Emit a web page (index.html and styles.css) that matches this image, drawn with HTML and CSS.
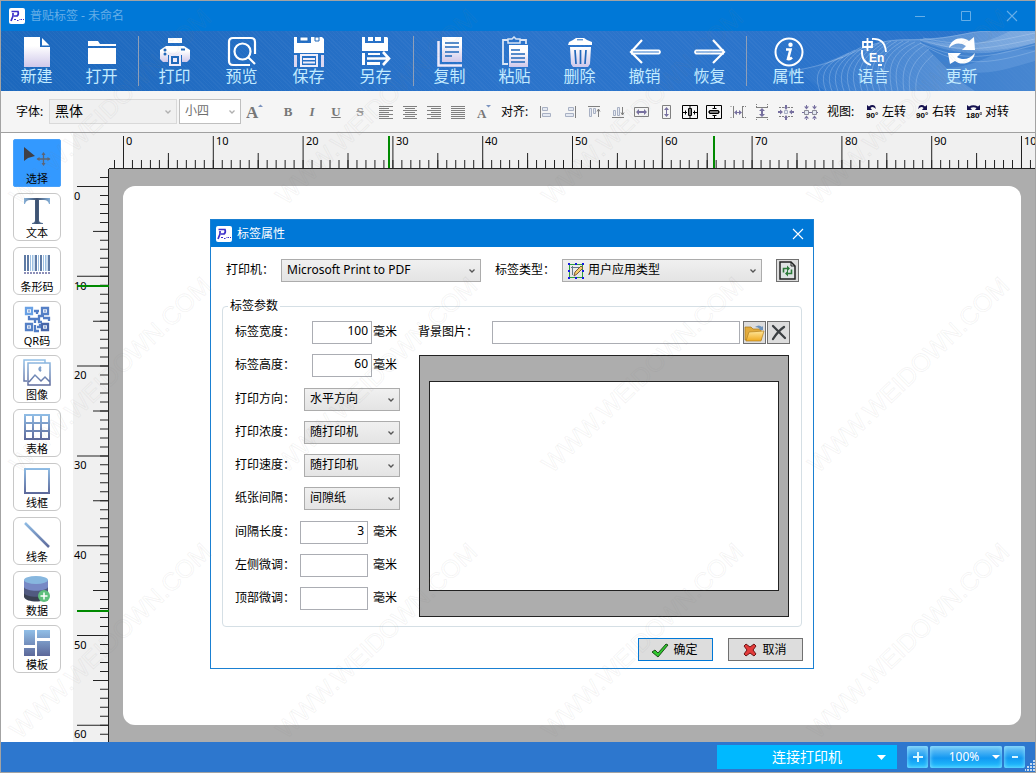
FILE: index.html
```html
<!DOCTYPE html>
<html lang="zh-CN">
<head>
<meta charset="utf-8">
<title>普贴标签 - 未命名</title>
<link rel="stylesheet" href="styles.css">
</head>
<body>
<svg class="defs" width="0" height="0" aria-hidden="true">
  <defs>
    <linearGradient id="pale" x1="0" y1="0" x2="0" y2="1"><stop offset=".3" stop-color="#fff"/><stop offset="1" stop-color="#cfc8ea"/></linearGradient>
    <linearGradient id="steel" gradientUnits="userSpaceOnUse" x1="0" y1="0" x2="0" y2="28"><stop offset="0" stop-color="#93c2ea"/><stop offset="1" stop-color="#5a6496"/></linearGradient>
    <linearGradient id="bars" gradientUnits="userSpaceOnUse" x1="0" y1="0" x2="28" y2="0"><stop offset="0" stop-color="#3f5680"/><stop offset=".5" stop-color="#9dc4e8"/><stop offset="1" stop-color="#3f5680"/></linearGradient>
    <linearGradient id="tee" gradientUnits="userSpaceOnUse" x1="0" y1="0" x2="28" y2="0"><stop offset="0" stop-color="#8db9e2"/><stop offset=".5" stop-color="#3c506f"/><stop offset="1" stop-color="#8db9e2"/></linearGradient>
    <linearGradient id="folder" x1="0" y1="0" x2="0" y2="1"><stop offset="0" stop-color="#ffe69a"/><stop offset="1" stop-color="#efa91e"/></linearGradient>
    <symbol id="logo" viewBox="0 0 16 16"><rect width="16" height="16" rx="2" fill="#fff"/><path d="M2.500 3.500H9q1 3-1 4.500H5M4 5v3l-2 5" fill="none" stroke="#3b2fc9" stroke-width="1.700"/><path d="M5 11.500h2M8 12.500h1.500M10.500 11.500h1M12 11.500h1M14 11.500h1" stroke="#3b2fc9" stroke-width="1.200"/></symbol>
    <symbol id="chev" viewBox="0 0 8 8"><path d="M1.500 2.500 4 5l2.500-2.500" fill="none" stroke="currentColor" stroke-width="1.300"/></symbol>
    <symbol id="close" viewBox="0 0 12 12"><path d="m1 1 10 10M11 1 1 11" stroke="currentColor" fill="none" stroke-width="1.100"/></symbol>
  </defs>
</svg>
<div class="window">
  <header class="titlebar">
    <svg class="logo" width="16" height="16"><use href="#logo"/></svg>
    <h1>普贴标签 - 未命名</h1>
    <div class="winbtns">
      <button aria-label="最小化"><svg width="12" height="12"><path d="M1 6.500h10" stroke="currentColor"/></svg></button>
      <button aria-label="最大化"><svg width="12" height="12"><path d="M1.500 1.500h9v9h-9z" fill="none" stroke="currentColor"/></svg></button>
      <button aria-label="关闭"><svg width="12" height="12"><use href="#close"/></svg></button>
    </div>
  </header>

  <nav class="toolbar">
    <svg class="waves" width="290" height="60" viewBox="0 0 290 60" aria-hidden="true">
      <defs>
        <linearGradient id="swell" x1="0" y1="0" x2="1" y2="0"><stop offset="0" stop-color="#fff" stop-opacity=".02"/><stop offset=".6" stop-color="#fff" stop-opacity=".2"/><stop offset="1" stop-color="#fff" stop-opacity=".3"/></linearGradient>
      </defs>
      <path d="M50 39C95 32 110 10 160 8c50 0 60-8 85-8h45v60H80q-20-15-30-21" fill="url(#swell)"/>
      <path d="M175 10c45 18 75 14 115 2v48h-60c-20-12-35-30-55-50" fill="#2a72c8" opacity=".55"/>
      <g fill="none" stroke="#c3dcf6" stroke-opacity=".38" stroke-width=".8">
        <path d="M30 42C110 34 110 9 160 9s60-9 85-9M175 9c45 14 65 9 115-1M178 7c45 10 65 5 112-5M175 12c45 20 65 15 115 2M180 15c35 20 60 20 110 5"/>
        <path d="M75 60C68 42 75 32 98 26M81 60C74 42 81 32 104 22M87 60C80 42 87 31 110 19M93 60C86 42 93 30 116 16M99 60C92 41 99 29 122 14M105 60C98 40 105 28 128 13M111 60C104 39 111 27 134 12M117 60C110 38 117 26 140 11M123 60C116 38 123 25 146 10M129 60C122 38 129 24 152 10M135 60C128 37 135 23 158 10M141 60C134 36 141 22 164 10M147 60C142 36 146 22 170 11M153 60C148 38 152 24 176 12M159 60C156 40 160 26 180 14M165 60C162 42 168 30 184 18M171 60C170 46 174 36 188 24"/>
      </g>
      <path d="M175 8c45 10 65 5 90-8h25v12c-40 10-75 12-115-4" fill="#fff" opacity=".14"/>
      <path d="M200 37c40-1 45-22 90-18v11c-30 8-50 18-90 7" fill="#8db8ea" opacity=".25"/>
    </svg>
    <button class="tool"><svg width="30" height="32"><path d="M2 1h16v10h10v20H2z" fill="url(#pale)"/><path d="m20 2 7.500 7.500H20z" fill="#fff"/></svg>新建</button>
    <button class="tool"><svg width="30" height="32"><path d="M1 5h10l2 3h16v2H1zM1 12h28v16H1z" fill="#fff"/></svg>打开</button>
    <span class="sep"></span>
    <button class="tool wide"><svg width="34" height="32"><path d="M10 2h14v5H10z" fill="#fff"/><path d="M8 10h18l6 4v9l-3 3h-5v-7H10v7H5l-3-3v-9z" fill="url(#pale)"/><path d="M12 19h10v10H12z" fill="#2168ba" stroke="#eeebfa" stroke-width="2"/><path d="M15 22h4v4h-4z" fill="#eeebfa"/><circle cx="7" cy="14" r="1.500" fill="#2168ba"/><circle cx="7" cy="18" r="1.500" fill="#2168ba"/><path d="M23 13.500h4" stroke="#2168ba" stroke-width="2"/></svg>打印</button>
    <button class="tool wide"><svg width="30" height="32" fill="none" stroke="#fff" stroke-width="2.200"><path d="M28 18V6q0-4-4-4H6Q2 2 2 6v19q0 4 4 4h17"/><circle cx="15.500" cy="15.500" r="8"/><path d="m21 21 7 7"/></svg>预览</button>
    <button class="tool wide"><svg width="32" height="32"><path d="M1 1h3v6h14V1h11l2 2v14H1z" fill="#fff"/><path d="M7 1h8v4H7zM22 1h4v4h-4z" fill="#fff" stroke="#2168ba"/><path d="M1 19h3v12H1zM28 19h3v12h-3z" fill="#ddd8f0"/><path d="M8 19h16v11H8zM10 23h12M10 26.500h12" fill="none" stroke="#f0eefa" stroke-width="2"/></svg>保存</button>
    <button class="tool wide"><svg width="32" height="32"><path d="M2 1h3v6h19V1h3l1 1v13H2zM8 1h5v4H8zM15 1h6v4h-6z" fill="#fff"/><path d="M2 17h3v12H2zM7 26h13v3H7zM8 17h12v2H8z" fill="#fff"/><path d="M7 22.500h20M23 16l6 6.500-6 6.500" fill="none" stroke="#fff" stroke-width="2.600"/></svg>另存</button>
    <span class="sep"></span>
    <button class="tool"><svg width="30" height="32"><path d="M7 1h20v25H7z" fill="url(#pale)"/><path d="M10 7h14M10 11h14M10 16h14M10 20h7" stroke="#2168ba" stroke-width="1.700"/><path d="M3.500 5v24.500H27" fill="none" stroke="#eeeafa" stroke-width="2.500"/></svg>复制</button>
    <button class="tool"><svg width="30" height="32"><path d="M8 4H3v24h5M20 4h6v4" fill="none" stroke="#d9e5f6" stroke-width="1.800"/><path d="M8 7V3h4l2-2 2 2h4v4z" fill="none" stroke="#d9e5f6" stroke-width="1.500"/><path d="M9 9h19v22H9z" fill="url(#pale)"/><path d="M11 14h9M11 18h14M11 22h14M11 26h14" stroke="#2168ba" stroke-width="1.500"/></svg>粘贴</button>
    <button class="tool"><svg width="30" height="32"><path d="M4 6 8 4l3-2h8l3 2 5 2v3H3zM5 11h21l-1 17-2 3H8l-2-3z" fill="url(#pale)"/><path d="m10 14 1 14M15.500 14v14M21 14l-1 14" stroke="#2168ba" stroke-width="1.700"/><path d="M12 3.800h6" stroke="#2168ba"/></svg>删除</button>
    <button class="tool"><svg width="34" height="32" fill="none" stroke="#fff" stroke-width="2.200"><path d="M14 4 3 16l11 11"/><path d="M3 14.500h28q2 1.500 0 3H3" stroke-width="1.800"/></svg>撤销</button>
    <button class="tool"><svg width="34" height="32" fill="none" stroke="#fff" stroke-width="2.200"><path d="m20 4 11 12-11 11"/><path d="M31 14.500H3q-2 1.500 0 3h28" stroke-width="1.800"/></svg>恢复</button>
    <span class="sep"></span>
    <button class="tool info"><svg width="32" height="32"><circle cx="16" cy="16" r="13.500" fill="none" stroke="#fff" stroke-width="2"/><circle cx="17.500" cy="8.800" r="2.200" fill="#fff"/><path d="M13 13.500h4.500L15 23q2 .5 4-1.500" fill="none" stroke="#fff" stroke-width="2.600"/></svg>属性</button>
    <button class="tool lang"><svg width="32" height="32"><path d="M14 3q13-1 14 13M4 14q-1 12 9 15M20 29h4" fill="none" stroke="#fff" stroke-width="1.800"/><path d="M5 6h9v5H5zM9.500 2v13" fill="none" stroke="#fff" stroke-width="1.800"/><text class="en" x="11" y="26">En</text></svg>语言</button>
    <button class="tool update"><svg width="32" height="32"><path d="M3 12C5 2 17 0 23 5l5-4 1 13H16l4-4C14 6 8 7 3 12zM29 17c-2 11-14 13-20 8l-5 3-2-11h13l-4 4c6 4 13 2 18-4z" fill="#fff"/></svg>更新</button>
  </nav>

  <div class="formatbar">
    <label for="font">字体:</label>
    <span class="pick font"><select id="font"><option>黑体</option></select><svg width="8" height="8"><use href="#chev"/></svg></span>
    <span class="pick size"><select aria-label="字号"><option>小四</option></select><svg width="8" height="8"><use href="#chev"/></svg></span>
    <button class="fmt" aria-label="增大字号"><svg width="18" height="18"><text class="serif big" x="0" y="15">A</text><path d="m12 4 2.500-2.500L17 4z" fill="#7b93bf"/></svg></button>
    <div class="group style">
      <button class="fmt serif"><b>B</b></button><button class="fmt serif"><i>I</i></button><button class="fmt serif"><u>U</u></button><button class="fmt serif strike"><s>S</s></button>
    </div>
    <div class="group align">
      <button class="fmt" aria-label="左对齐"><svg width="14" height="14"><path d="M0 1.500h14M0 3.500h10M0 5.500h14M0 7.500h10M0 9.500h14M0 11.500h10M0 13.500h14"/></svg></button>
      <button class="fmt" aria-label="居中"><svg width="14" height="14"><path d="M0 1.500h14M2 3.500h10M0 5.500h14M2 7.500h10M0 9.500h14M2 11.500h10M0 13.500h14"/></svg></button>
      <button class="fmt" aria-label="右对齐"><svg width="14" height="14"><path d="M0 1.500h14M4 3.500h10M0 5.500h14M4 7.500h10M0 9.500h14M4 11.500h10M0 13.500h14"/></svg></button>
      <button class="fmt" aria-label="两端对齐"><svg width="14" height="14"><path d="M0 1.500h14M0 3.500h14M0 5.500h14M0 7.500h14M0 9.500h14M0 11.500h14M0 13.500h14"/></svg></button>
    </div>
    <button class="fmt" aria-label="减小字号"><svg width="18" height="18"><text class="serif" x="2" y="15">A</text><path d="m11 2 2.500 2.500L16 2z" fill="#7b93bf"/></svg></button>
    <span class="cap">对齐:</span>
    <div class="group arrange">
      <button class="fmt" aria-label="左边对齐"><svg width="16" height="16"><path d="M2.500 2v12"/><path class="lt" d="M4.500 3.500h5v3h-5zM4.500 9.500h8v3h-8z"/></svg></button>
      <button class="fmt" aria-label="右边对齐"><svg width="16" height="16"><path d="M13.500 2v12"/><path class="lt" d="M6.500 3.500h5v3h-5zM3.500 9.500h8v3h-8z"/></svg></button>
      <button class="fmt" aria-label="顶部对齐"><svg width="16" height="16"><path d="M2 2.500h12M12.500 5v8M11 7.500 12.500 5 14 7.500"/><path class="lt" d="M3.500 4.500h2v8h-2zM7.500 4.500h2v5h-2z"/></svg></button>
      <button class="fmt" aria-label="底部对齐"><svg width="16" height="16"><path d="M2 13.500h12M12.500 3v8M11 8.500l1.500 2.500L14 8.500"/><path class="lt" d="M3.500 6.500h2v5h-2zM7.500 3.500h2v8h-2z"/></svg></button>
      <button class="fmt" aria-label="等宽"><svg width="16" height="16"><path d="M.5 3.500h14v9H.5z"/><path class="arr" d="M5 5 2 8l3 3V9h5v2l3-3-3-3v2H5z"/></svg></button>
      <button class="fmt" aria-label="等高"><svg width="16" height="16"><path d="M4.500 1.500h8v13h-8z"/><path class="arr" d="M6 6l2.500-3L11 6H9v4h2l-2.500 3L6 10h2V6z"/></svg></button>
      <button class="fmt dark" aria-label="水平居中"><svg width="16" height="16"><path d="M.5 1.500h15v13H.5zM6.500 4.500h3v7h-3zM8 2v12M1 8.500h4M15 8.500h-4M3.500 6.500v4M12.500 6.500v4"/></svg></button>
      <button class="fmt dark" aria-label="垂直居中"><svg width="16" height="16"><path d="M.5 1.500h15v13H.5zM3.500 6.500h9v3h-9zM2 8h12M8.500 2v3M8.500 14v-3M6.500 4.500h4M6.500 11.500h4"/></svg></button>
      <button class="fmt" aria-label="水平间距"><svg width="16" height="16"><path stroke-dasharray="1 1" d="M.5 2.500h2M.5 13.500h2M13 2.500h3M13 13.500h3"/><path d="M3.500 2v12M12.500 2v12"/><path class="arr" d="M7 6 4 8.500 7 11V9h2v2l3-2.500L9 6v2H7z"/></svg></button>
      <button class="fmt" aria-label="垂直间距"><svg width="16" height="16"><path stroke-dasharray="1 1" d="M2.500 0v3M13.500 0v3M2.500 13v3M13.500 13v3"/><path d="M2 3.500h12M2 13.500h12"/><path class="arr" d="M5 7l3-3 3 3H9v3h2l-3 3-3-3h2V7z"/></svg></button>
      <button class="fmt" aria-label="等距横排"><svg width="16" height="16"><path stroke-dasharray="2 1" d="M1 3.500h14M1 12.500h14"/><path class="lt" d="M6.500 6.500h3v3h-3z"/><path class="arr" d="M6 3h4L8 6zM6 14h4l-2-3zM2 5.500 5 8l-3 2.500zM14 5.500 11 8l3 2.500zM7 1h2v2H7zM7 14h2v2H7zM0 7h2v2H0zM14 7h2v2h-2z"/></svg></button>
      <button class="fmt" aria-label="等距竖排"><svg width="16" height="16"><path class="lt dk" d="M2.500 6.500h4v4h-4zM10.500 6.500h4v4h-4z"/><path class="arr" d="M2 2.500h5L4.500 5.500zM2 14.500h5l-2.500-3zM10 2.500h5l-2.500 3zM10 14.500h5l-2.500-3zM4 1h1v2H4zM12 1h1v2h-1zM0 8h2v1H0zM7 8h3v1H7zM15 8h1v1h-1zM4 14h1v2H4zM12 14h1v2h-1z"/></svg></button>
    </div>
    <span class="cap">视图:</span>
    <div class="group turn">
      <button><svg width="13" height="16"><path d="M1 6V1l2 1.500Q6 0 9 2l1 3-2-1.500Q6 2.500 4.500 4L6 6z" class="ink"/><text class="deg" x="0" y="14">90°</text></svg>左转</button>
      <button><svg width="13" height="16"><path d="M11 6V1L9 2.500Q6 0 3 2L2 5l2-1.500Q6 2.500 7.500 4L6 6z" class="ink"/><text class="deg" x="0" y="14">90°</text></svg>右转</button>
      <button><svg width="16" height="16"><path d="M1 6V1l2 1.500q4-2.500 9 0L14 1v5H9l1.500-2q-3-1.500-6 0L6 6z" class="ink"/><text class="deg" x="0" y="14">180°</text></svg>对转</button>
    </div>
  </div>

  <main class="work">
    <aside class="palette">
      <button class="item on"><svg width="28" height="28"><path d="M1 4v14l4-3 7-2z" fill="#3f3f46"/><path d="M20.500 10v12M14.500 16h12" stroke="#5b6577" stroke-width="1.300"/><path d="m18.500 12 2-3 2 3zM18.500 20l2 3 2-3zM16.500 14l-3 2 3 2zM24.500 14l3 2-3 2z" fill="#5b6577"/></svg>选择</button>
      <button class="item"><svg width="28" height="28"><path d="M1 1h26v6h-1q-1-4-5-4h-5v20q0 3 4 3v1H9v-1q3 0 3-3V3H7Q3 3 2 7H1z" fill="url(#tee)"/></svg>文本</button>
      <button class="item"><svg width="28" height="28"><path d="M2 4v16M5 4v16M13 4v16M18 4v16M26 4v16" stroke="#5f7ba5" stroke-width="2"/><path d="M7.500 4v16M9.500 4v16M11 4v16M15.500 4v16M20.500 4v16M22.500 4v16M24 4v16" stroke="#9dc0e2"/><path d="M1 22h26" stroke="#8d8fb8" stroke-width="2" stroke-dasharray="2 1"/></svg>条形码</button>
      <button class="item"><svg width="28" height="28" fill="none" stroke-width="2.300"><path d="M3 3h6v6H3z" stroke="#69a1e5"/><path d="M19 3h6v6h-6zM3 19h6v6H3z" stroke="#5580c6"/><path d="M19 19h6v6h-6z" stroke="#4765a8"/><path d="M11 6h5M14 6v3M6 11v3h6v4M12 14h4v-3h5M16 14v3h3M20 13h6v3M12 20v6h4M14 22h3v-3" stroke="#527dc5"/><path d="M5.500 6h1M21.500 6h1M5.500 22h1M21.500 22h1" stroke="#426db9"/></svg>QR码</button>
      <button class="item"><svg width="28" height="28" fill="none" stroke="url(#steel)" stroke-width="1.500"><path d="M4 22H1V1h21v3M5 4h22v22H5zM6 23l6-7 6 6 4-4 5 5"/><path d="M18 8q-3 2 0 4" stroke-width="2.500"/></svg>图像</button>
      <button class="item"><svg width="28" height="28"><path d="M1 1h26v26H1z" fill="url(#steel)"/><path d="M3 3h6v6H3zM11 3h6v6h-6zM19 3h6v6h-6zM3 11h6v6H3zM11 11h6v6h-6zM19 11h6v6h-6zM3 19h6v6H3zM11 19h6v6h-6zM19 19h6v6h-6z" fill="#fff"/></svg>表格</button>
      <button class="item"><svg width="28" height="28"><path d="M2 2h24v24H2z" fill="none" stroke="url(#steel)" stroke-width="2"/></svg>线框</button>
      <button class="item"><svg width="28" height="28"><path d="m2 2 24 24" fill="none" stroke="url(#steel)" stroke-width="2.500"/></svg>线条</button>
      <button class="item"><svg width="28" height="28"><path d="M1 16v6c2 6 22 6 24 0v-6z" fill="#3a4152"/><path d="M1 12v6c2 5 22 5 24 0v-6z" fill="#515a80"/><path d="M1 5v7c2 5 22 5 24 0V5z" fill="#7789c5"/><ellipse cx="13" cy="5" rx="12" ry="4" fill="#87b7df"/><circle cx="21" cy="21" r="6" fill="#5fbf7d"/><path d="M21 17.500v7M17.500 21h7" stroke="#fff" stroke-width="1.500"/></svg>数据</button>
      <button class="item"><svg width="28" height="28" fill="url(#steel)"><path d="M1 1h11v15H1zM14 1h13v8H14zM14 12h13v15H14zM1 19h11v8H1z"/></svg>模板</button>
    </aside>
    <div class="board">
      <span class="corner"></span>
      <svg class="ruler top" width="100%" height="36">
        <line x1="14" x2="100%" y1="19" y2="19" stroke-width="32" stroke-dasharray="1 88.800"/>
        <line x1="58.900" x2="100%" y1="28" y2="28" stroke-width="16" stroke-dasharray="1 88.800"/>
        <line x1="5" x2="100%" y1="31" y2="31" stroke-width="8" stroke-dasharray="1 7.980"/>
        <line x1="0" x2="100%" y1="35.500" y2="35.500"/>
        <path class="mark" d="M280 3v32M605 3v32"/>
        <g><text x="17" y="12">0</text><text x="107" y="12">10</text><text x="197" y="12">20</text><text x="287" y="12">30</text><text x="376" y="12">40</text><text x="466" y="12">50</text><text x="556" y="12">60</text><text x="646" y="12">70</text><text x="736" y="12">80</text><text x="825" y="12">90</text><text x="915" y="12">100</text></g>
      </svg>
      <svg class="ruler side" width="36" height="100%">
        <line y1="17" y2="100%" x1="19.500" x2="19.500" stroke-width="31" stroke-dasharray="1 88.800"/>
        <line y1="61.900" y2="100%" x1="27.500" x2="27.500" stroke-width="15" stroke-dasharray="1 88.800"/>
        <line y1="8" y2="100%" x1="31" x2="31" stroke-width="8" stroke-dasharray="1 7.980"/>
        <line y1="0" y2="100%" x1="35.500" x2="35.500"/>
        <g><text x="1" y="31">0</text><text x="1" y="121">10</text><text x="1" y="210">20</text><text x="1" y="300">30</text><text x="1" y="390">40</text><text x="1" y="480">50</text><text x="1" y="569">60</text></g>
        <path class="mark" d="M4 117h32M4 442h32"/>
      </svg>
      <div class="canvas"><div class="sheet"></div></div>
    </div>
  </main>

  <footer class="status">
    <button class="connect"><span>连接打印机</span><svg width="9" height="5"><path d="M0 0h9L4.500 5z" fill="#fff"/></svg></button>
    <div class="zoom">
      <button class="glass step" aria-label="放大"><svg width="12" height="12"><path d="M6 1v10M1 6h10" stroke="#d9f6ff" stroke-width="2"/></svg></button>
      <button class="glass level"><span>100%</span><svg width="8" height="5"><path d="M0 0h8L4 4z" fill="#fff"/></svg></button>
      <button class="glass step" aria-label="缩小"><svg width="12" height="12"><path d="M3 6h6" stroke="#d9f6ff" stroke-width="2"/></svg></button>
    </div>
    <svg class="grip" width="10" height="12" fill="#c4d8ee"><path d="M8 0h2v2H8zM5 3h2v2H5zM8 3h2v2H8zM2 6h2v2H2zM5 6h2v2H5zM8 6h2v2H8zM0 9h1v2H0zM2 9h2v2H2zM5 9h2v2H5zM8 9h2v2H8z"/></svg>
  </footer>
</div>

<section class="dialog" role="dialog" aria-labelledby="dlg-title">
  <header>
    <svg width="16" height="16"><use href="#logo"/></svg>
    <h2 id="dlg-title">标签属性</h2>
    <button aria-label="关闭"><svg width="12" height="12"><use href="#close"/></svg></button>
  </header>
  <form>
    <div class="row printer">
      <label for="printer">打印机：</label>
      <span class="pick long"><select id="printer"><option>Microsoft Print to PDF</option></select><svg width="8" height="8"><use href="#chev"/></svg></span>
      <label class="kind" for="kind">标签类型：</label>
      <span class="pick long withicon"><select id="kind"><option>用户应用类型</option></select>
        <svg class="lead" width="16" height="16"><path d="M1.500 1.500h13v13h-13z" fill="none" stroke="#2f9e3f"/><path d="M3 4.500h9M4.500 3v9" stroke="#678"/><path d="m6 13 1-4 6-6 2 2-6 6z" fill="#f6cd6b" stroke="#7b5a3c"/><path d="M0 0h2v2H0zM7 0h2v2H7zM14 0h2v2h-2zM0 7h2v2H0zM0 14h2v2H0zM7 14h2v2H7zM14 14h2v2h-2zM14 7h2v2h-2z" fill="#1519e0"/></svg>
        <svg width="8" height="8"><use href="#chev"/></svg></span>
      <button type="button" class="square" aria-label="刷新"><svg width="17" height="19"><path d="M1 1h11l4 4v13H1z" fill="#dfe3e3" stroke="#222" stroke-width="1.500"/><path d="M12 1v4h4" fill="none" stroke="#222"/><path d="M4.500 11.500v-4H8M12.500 8.500v4H9" fill="none" stroke="#2c7a39" stroke-width="1.600"/><path d="m8 4.500 3 3-3 3zM9 9.500l-3 3 3 3z" fill="#2c7a39"/></svg></button>
    </div>
    <fieldset>
      <legend>标签参数</legend>
      <div class="params">
        <div class="fields">
          <div class="set dims">
            <div class="row"><label for="w">标签宽度：</label><input id="w" value="100"><span>毫米</span></div>
            <div class="row"><label for="h">标签高度：</label><input id="h" value="60"><span>毫米</span></div>
          </div>
          <div class="set modes">
            <div class="row"><label for="dir">打印方向：</label><span class="pick"><select id="dir"><option>水平方向</option></select><svg width="8" height="8"><use href="#chev"/></svg></span></div>
            <div class="row"><label for="dens">打印浓度：</label><span class="pick"><select id="dens"><option>随打印机</option></select><svg width="8" height="8"><use href="#chev"/></svg></span></div>
            <div class="row"><label for="speed">打印速度：</label><span class="pick"><select id="speed"><option>随打印机</option></select><svg width="8" height="8"><use href="#chev"/></svg></span></div>
            <div class="row"><label for="gap">纸张间隔：</label><span class="pick"><select id="gap"><option>间隙纸</option></select><svg width="8" height="8"><use href="#chev"/></svg></span></div>
          </div>
          <div class="set tune">
            <div class="row"><label for="len">间隔长度：</label><input id="len" value="3"><span>毫米</span></div>
            <div class="row"><label for="left">左侧微调：</label><input id="left"><span>毫米</span></div>
            <div class="row"><label for="topadj">顶部微调：</label><input id="topadj"><span>毫米</span></div>
          </div>
        </div>
        <div class="picture">
          <div class="row"><label for="bg">背景图片：</label><input id="bg">
            <button type="button" class="square" aria-label="打开图片"><svg width="21" height="18"><path d="M1 3h6l2 2h8v11H1z" fill="#e2ab3c" stroke="#a97915" stroke-width=".7"/><path d="m5 8 15-1-3 10H2z" fill="url(#folder)" stroke="#b58321" stroke-width=".7"/><path d="M11 3q4-3 7 0l1-1v4h-4l1-1q-2-2-5-2" fill="#6d92bb"/></svg></button><button type="button" class="square" aria-label="清除图片"><svg width="18" height="18"><path d="M3 2q5 5 12 12M14 3Q8 7 3 15" fill="none" stroke="#3c4043" stroke-width="2.300" stroke-linecap="round"/></svg></button>
          </div>
          <div class="preview"><div></div></div>
        </div>
      </div>
    </fieldset>
    <div class="actions">
      <button type="button" class="ok"><svg width="18" height="16"><path d="m1 10 3-2 3 3 8-9 2 1L7 15z" fill="#30c92f" stroke="#1c4e19"/></svg>确定</button>
      <button type="button"><svg width="16" height="16"><path d="m2 4 2-2 4 3 4-3 2 2-3 4 3 4-2 2-4-3-4 3-2-2 3-4z" fill="#e33c3c" stroke="#6d1616"/></svg>取消</button>
    </div>
  </form>
</section>

<svg class="stamp" width="100%" height="100%" aria-hidden="true">
  <defs><g id="site"><text transform="rotate(-44)">WWW.WEIDOWN.COM</text></g></defs>
  <use href="#site" x="20" y="206"/><use href="#site" x="286" y="206"/><use href="#site" x="552" y="206"/><use href="#site" x="818" y="206"/>
  <use href="#site" x="20" y="474"/><use href="#site" x="286" y="474"/><use href="#site" x="552" y="474"/><use href="#site" x="818" y="474"/>
  <use href="#site" x="20" y="740"/><use href="#site" x="286" y="740"/><use href="#site" x="552" y="740"/><use href="#site" x="818" y="740"/>
</svg>
</body>
</html>
```

FILE: styles.css
```css
* { box-sizing: border-box; }

body {
  margin: 0;
  position: relative;
  height: 100vh;
  overflow: hidden;
  font: 12px/16px "Noto Sans", "Noto Sans CJK SC", sans-serif;
  color: #000;
}

.defs, .waves, .stamp { position: absolute; }

button, input, select { font: inherit; color: inherit; margin: 0; border-radius: 0; }
button { padding: 0; border: 0; background: none; display: flex; align-items: center; justify-content: center; }
svg { display: block; flex: none; }
h1, h2 { margin: 0; font-size: 12px; font-weight: 400; }

.window { display: flex; flex-direction: column; height: 100%; border: 1px solid #a3a3a3; }

/* title bar */
.titlebar { display: flex; align-items: center; height: 30px; padding-left: 8px; background: #0078d7; color: #66aee7; }
.titlebar h1 { margin-left: 5px; flex: 1; }
.winbtns { display: flex; }
.winbtns button { width: 46px; height: 28px; }

/* main toolbar */
.toolbar {
  position: relative;
  display: flex;
  height: 60px;
  padding-left: 3px;
  background: repeating-linear-gradient(45deg, #ffffff08 0 1px, transparent 1px 3px), linear-gradient(90deg, #1c68bd, #2b74cb 50%);
}
.waves { right: 0; top: 0; }
.tool { position: relative; flex-direction: column; justify-content: flex-start; width: 65px; padding-top: 5px; font-size: 16px; line-height: 17px; color: #c3ebff; }
.wide { width: 67px; }
.sep { width: 1px; height: 50px; margin: 5px 2px 0 4px; background: #8f9fb8; }
.sep + .tool:not(.wide):not(.info) { margin-left: 1px; }
.info { margin-left: 7px; }
.lang { margin-left: 20px; }
.update { margin-left: 23px; }
.en { font: bold 12px "Liberation Sans", sans-serif; fill: #fff; }

/* format bar */
.formatbar { display: flex; align-items: center; height: 42px; padding-left: 15px; background: #f5f5f5; border-bottom: 1px solid #a0a0a0; white-space: nowrap; }
.formatbar label { width: 33px; }
.pick { display: grid; height: 23px; color: #000; }
.pick > * { grid-area: 1 / 1; }
.pick select { appearance: none; width: 100%; padding: 0 5px 2px; border: 1px solid #acacac; background: linear-gradient(#f0f0f0, #e4e4e4); }
.pick svg { place-self: center end; margin-right: 5px; color: #555; pointer-events: none; }
.pick .lead { place-self: center start; margin-left: 6px; }
.withicon select { padding-left: 25px; }
.font { width: 128px; height: 25px; font-size: 14px; }
.font select { background: #f0f0f0; border-color: #d9d9d9; }
.size { width: 62px; height: 25px; margin: 0 2px; color: #6d6d6d; }
.size select { background: #fff; border-color: #bfbfbf; }
.font svg, .size svg { color: #b0b0b0; }
.fmt { width: 24px; height: 24px; }
.fmt svg { fill: none; stroke: #808080; }
.fmt text { fill: #777; stroke: none; }
.fmt svg .lt { fill: #e4e9f2; stroke: #a9b1c4; }
.fmt svg .dk { stroke: #8d8d99; }
.fmt svg .arr { fill: #77709f; stroke: none; }
.fmt path[fill] { stroke: none; }
.fmt.dark svg { stroke: #000; }
.serif { font: bold 13px/16px "Liberation Serif", serif; color: #777; }
.serif.big { font-size: 17px; }
.strike { color: #999; }
.group { display: flex; }
.style { margin-left: 9px; }
.align { margin: 0 2px; }
.cap { width: 29px; margin: 0 4px 0 5px; }
.turn { gap: 10px; margin-left: 6px; }
.turn button { gap: 3px; }
.ink { fill: #15114f; stroke: none; }
.deg { font: bold 8px "Liberation Sans", sans-serif; }

/* work area */
.work { display: flex; flex: 1; min-height: 0; }
.palette { display: flex; flex-direction: column; gap: 6px; width: 72px; padding: 6px 12px; background: #fff; }
.item { flex-direction: column; justify-content: flex-start; gap: 1px; height: 48px; padding-top: 3px; border: 1px solid #c8c8c8; border-radius: 6px; font-size: 11px; line-height: 14px; }
.on { background: #3399ff; border-color: #4aa2fb; border-radius: 2px; }
.board { flex: 1; min-width: 0; display: grid; grid-template: 36px 1fr / 36px 1fr; }
.corner, .ruler { background: #f0f0f0; }
.ruler { min-width: 0; min-height: 0; overflow: hidden; stroke: #222; }
.ruler text { font-size: 11px; fill: #000; stroke: none; }
.ruler .mark { stroke: #008a00; stroke-width: 2; }
.canvas { display: flex; padding: 17px 14px; background: #adadad; }
.sheet { flex: 1; background: #fff; border-radius: 12px; }

/* status bar */
.status { display: flex; align-items: center; justify-content: flex-end; height: 30px; background: #2d77ce; color: #fff; }
.connect { width: 180px; height: 24px; margin-right: 10px; padding-right: 11px; background: #00b9ff; font-size: 14px; }
.connect span { flex: 1; padding-left: 20px; text-align: center; }
.zoom { display: flex; gap: 2px; }
.glass { height: 22px; border-radius: 2px; background: linear-gradient(#7acaf6, #1298f2 55%, #24c3ff); box-shadow: inset 0 0 4px #8fe2ff; }
.step { width: 21px; }
.level { width: 72px; padding-right: 2px; }
.level span { flex: 1; padding-left: 6px; text-align: center; }
.grip { align-self: flex-end; }

/* dialog */
.dialog { position: absolute; left: 210px; top: 219px; width: 604px; background: #fff; border: 1px solid #1a80d2; }
.dialog header { display: flex; align-items: center; height: 27px; padding: 0 9px 0 5px; background: #0078d7; color: #fff; }
.dialog h2 { flex: 1; margin-left: 5px; }
.dialog form { padding: 12px 11px 7px; }
.row { display: flex; align-items: center; height: 23px; }
.row label { padding-bottom: 2px; white-space: nowrap; }
.printer { padding-left: 4px; }
.printer label { width: 55px; }
.printer .kind { width: 67px; margin-left: 14px; }
.long { width: 200px; }
.square { width: 23px; height: 23px; border: 1px solid #707070; background: #ddd; }
.printer .square { margin-left: 14px; }
.dialog input { width: 68px; height: 23px; padding: 0 3px 4px; border: 1px solid #abadb3; text-align: right; background: #fff; }

fieldset { margin: 16px 0 0; padding: 0 12px 9px; border: 1px solid #d5dfe5; border-radius: 4px; }
legend { margin-left: -7px; padding: 0 2px; }
.params { display: flex; gap: 18px; padding-top: 7px; }
.fields { display: flex; flex-direction: column; gap: 11px; width: 165px; padding-bottom: 7px; }
.set { display: flex; flex-direction: column; gap: 10px; }
.set .row span:last-child { flex: none; }
.set .row > span:not(.pick) { padding-bottom: 2px; }
.dims label { width: 77px; }
.dims input { width: 60px; margin-right: 1px; }
.modes label { width: 69px; }
.modes .pick { width: 96px; }
.tune label { width: 65px; }
.tune input { margin-right: 5px; }
.picture { flex: 1; display: flex; flex-direction: column; gap: 11px; }
.picture .row { margin-right: -1px; }
.picture label { width: 74px; }
.picture input { flex: 1; margin-right: 3px; }
.picture .square + .square { margin-left: 1px; }
.preview { flex: 1; display: flex; margin-left: 1px; padding: 25px 9px; border: 1px solid #222; background: #adadad; }
.preview div { flex: 1; border: 1px solid #222; background: #fff; }

.actions { display: flex; justify-content: flex-end; gap: 15px; padding-top: 11px; margin-right: -1px; }
.actions button { width: 75px; height: 23px; gap: 4px; padding-right: 2px; border: 1px solid #707070; background: #ddd; }
.actions .ok { border-color: #0078d7; }

/* site stamp */
.stamp { left: 0; top: 0; pointer-events: none; font: 25px "Liberation Sans", sans-serif; fill: none; stroke: #808080; stroke-opacity: .09; }
```
